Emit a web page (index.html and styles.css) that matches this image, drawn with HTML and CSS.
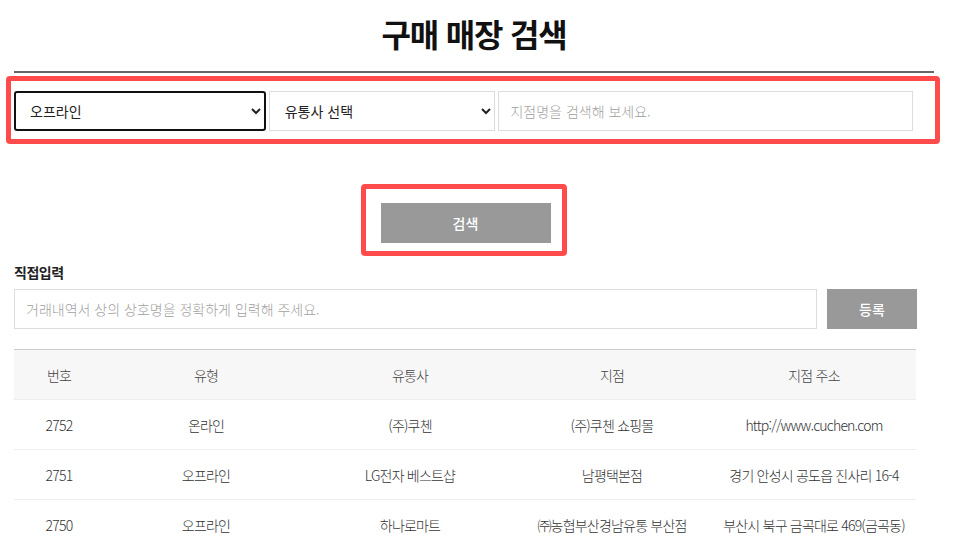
FILE: index.html
```html
<!DOCTYPE html>
<html lang="ko">
<head>
<meta charset="utf-8">
<title>구매 매장 검색</title>
<link rel="stylesheet" href="styles.css">
</head>
<body>
<div class="page">
  <h1 class="title">구매 매장 검색</h1>
  <div class="rule"></div>

  <div class="filters">
    <select class="sel sel-type focused">
      <option>오프라인</option>
      <option>온라인</option>
    </select>
    <select class="sel sel-dist">
      <option>유통사 선택</option>
    </select>
    <input class="txt txt-branch" type="text" placeholder="지점명을 검색해 보세요.">
  </div>

  <div class="search-row">
    <button class="btn btn-search" type="button">검색</button>
  </div>

  <div class="direct">
    <div class="direct-label">직접입력</div>
    <div class="direct-row">
      <input class="txt txt-direct" type="text" placeholder="거래내역서 상의 상호명을 정확하게 입력해 주세요.">
      <button class="btn btn-reg" type="button">등록</button>
    </div>
  </div>

  <table class="list">
    <colgroup>
      <col class="c1"><col class="c2"><col class="c3"><col class="c4"><col class="c5">
    </colgroup>
    <thead>
      <tr><th>번호</th><th>유형</th><th>유통사</th><th>지점</th><th>지점 주소</th></tr>
    </thead>
    <tbody>
      <tr><td>2752</td><td>온라인</td><td>(주)쿠첸</td><td>(주)쿠첸 쇼핑몰</td><td>http://www.cuchen.com</td></tr>
      <tr><td>2751</td><td>오프라인</td><td>LG전자 베스트샵</td><td>남평택본점</td><td>경기 안성시 공도읍 진사리 16-4</td></tr>
      <tr><td>2750</td><td>오프라인</td><td>하나로마트</td><td>㈜농협부산경남유통 부산점</td><td>부산시 북구 금곡대로 469(금곡동)</td></tr>
    </tbody>
  </table>

  <div class="mark mark-filters"></div>
  <div class="mark mark-search"></div>
</div>
</body>
</html>
```

FILE: styles.css
```css
html, body {
  margin: 0;
  padding: 0;
  background: #fff;
}
body {
  font-family: "Noto Sans CJK KR", "Noto Sans", sans-serif;
  color: #222;
}
.page {
  position: relative;
  width: 920px;
  padding: 14px 0 0 14px;
}
.title {
  margin: 0;
  height: 45px;
  line-height: 38px;
  text-align: center;
  font-size: 32px;
  font-weight: 700;
  letter-spacing: -1.2px;
  color: #111;
}
.rule {
  height: 2px;
  background: #666;
  margin-top: 12px;
}
.filters {
  display: flex;
  margin-top: 18px;
  width: 899px;
  height: 40px;
}
.sel {
  height: 40px;
  font-family: inherit;
  font-size: 14px;
  color: #222;
  background: #fff;
  border: 1px solid #ddd;
  padding: 0 8px 0 11px;
  box-sizing: border-box;
  margin: 0;
}
.sel-type {
  width: 252px;
}
.sel-type.focused {
  border: 2px solid #111;
  border-radius: 3px;
  padding-left: 10px;
}
.sel-dist {
  width: 227px;
  margin-left: 3px;
}
.txt {
  box-sizing: border-box;
  height: 40px;
  border: 1px solid #ddd;
  font-family: inherit;
  font-size: 14px;
  padding: 0 11px;
  margin: 0;
  color: #222;
  outline: none;
}
.txt::placeholder {
  color: #9f9f9f;
  font-weight: 300;
}
.txt-branch {
  width: 415px;
  margin-left: 3px;
}
.search-row {
  display: flex;
  justify-content: center;
  width: 903px;
  margin-top: 72px;
}
.btn {
  border: 0;
  background: #999;
  color: #fff;
  font-family: inherit;
  font-size: 14px;
  font-weight: 500;
  cursor: pointer;
  padding: 0;
}
.btn-search {
  width: 170px;
  height: 40px;
}
.direct {
  width: 903px;
  margin-top: 20px;
}
.direct-label {
  font-size: 14px;
  font-weight: 700;
  color: #222;
  line-height: 18px;
  letter-spacing: -0.5px;
}
.direct-row {
  display: flex;
  gap: 10px;
  margin-top: 8px;
}
.txt-direct {
  width: 803px;
}
.btn-reg {
  width: 90px;
  height: 40px;
}
.list {
  width: 902px;
  margin-top: 20px;
  border-collapse: collapse;
  table-layout: fixed;
  border-top: 1px solid #ccc;
}
.c1 { width: 90px; }
.c2 { width: 204px; }
.c3 { width: 204px; }
.c4 { width: 200px; }
.c5 { width: 204px; }
.list th, .list td {
  height: 49px;
  padding: 0;
  text-align: center;
  font-size: 14px;
  font-weight: 300;
  color: #333;
  letter-spacing: -0.8px;
  border-bottom: 1px solid #eee;
  white-space: nowrap;
}
.list th {
  background: #f7f7f7;
  color: #444;
}
.mark {
  position: absolute;
  border: 5px solid #ff4b4b;
  border-radius: 4px;
  box-sizing: border-box;
  pointer-events: none;
}
.mark-filters {
  left: 6px;
  top: 76px;
  width: 934px;
  height: 68px;
}
.mark-search {
  left: 361px;
  top: 184px;
  width: 206px;
  height: 72px;
}
```
